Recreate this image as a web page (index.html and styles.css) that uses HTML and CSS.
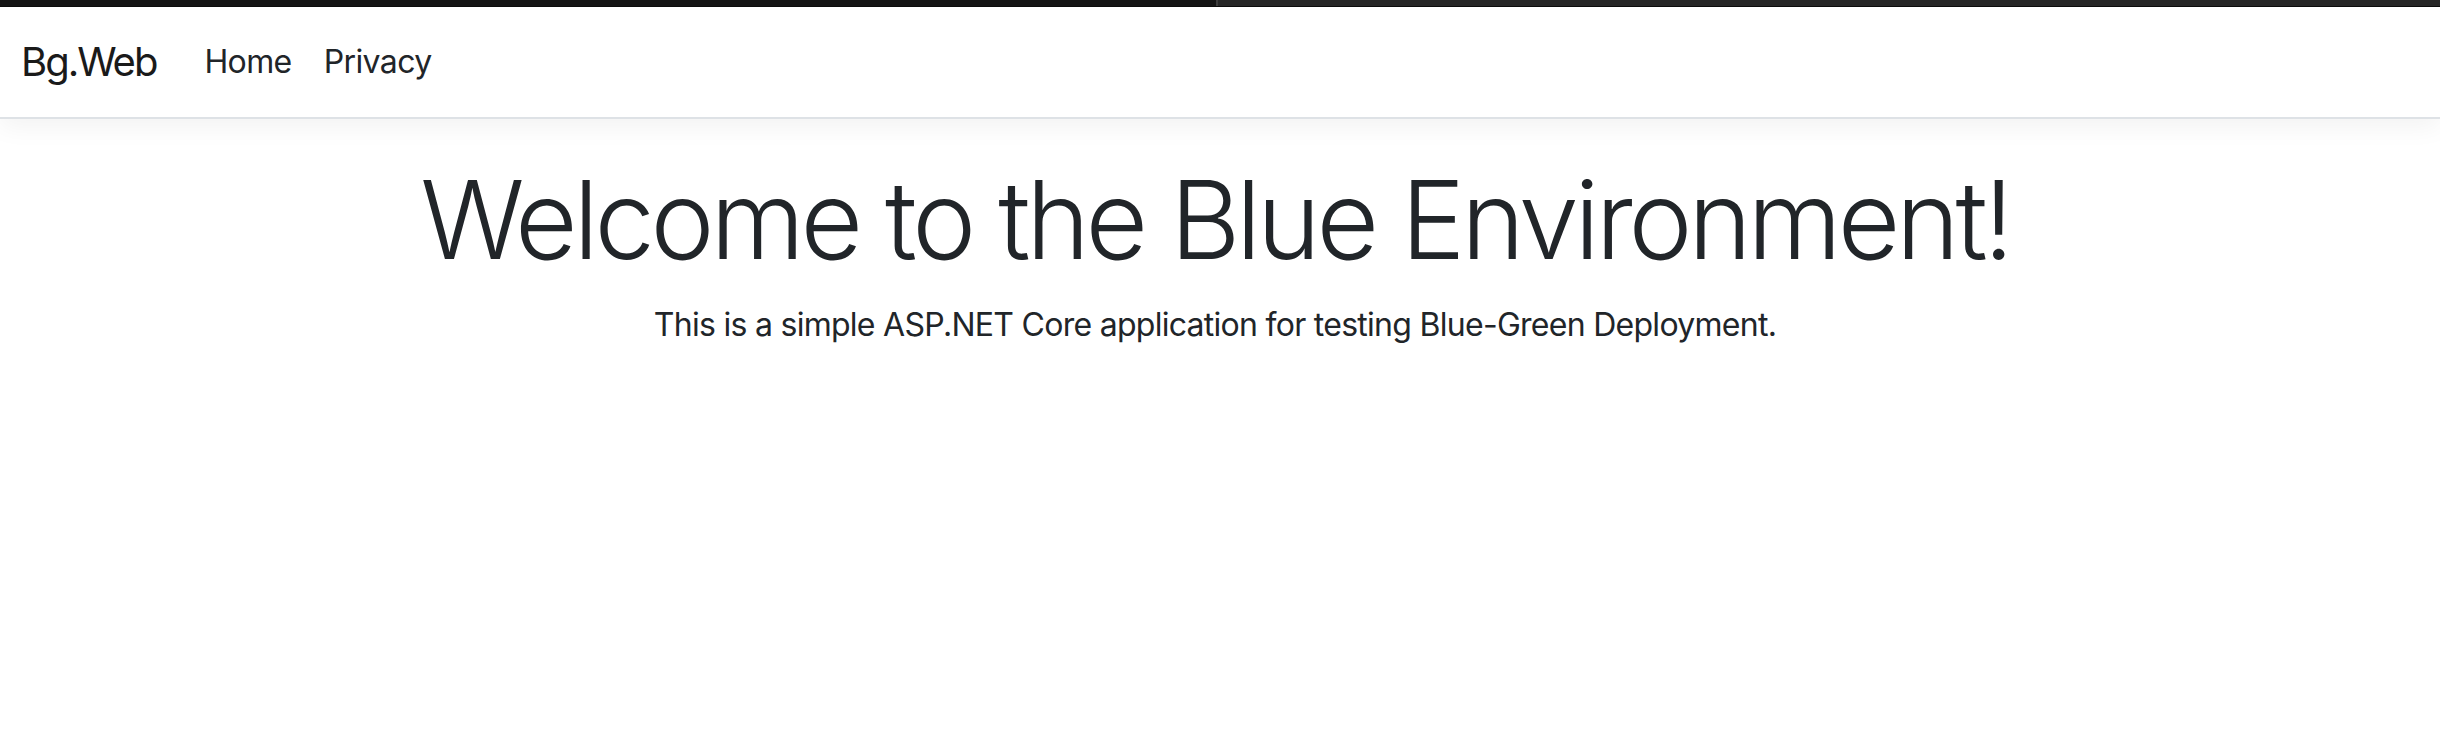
FILE: index.html
```html
<!DOCTYPE html>
<html lang="en">
<head>
<meta charset="utf-8">
<title>Home Page - Bg.Web</title>
<link rel="stylesheet" href="styles.css">
</head>
<body>
<div class="topbar"><div class="topbar-left"></div><div class="topbar-right"></div></div>
<header class="site-header">
  <nav class="navbar">
    <a class="brand" href="#">Bg.Web</a>
    <ul class="nav">
      <li><a class="nav-link" href="#">Home</a></li>
      <li><a class="nav-link" href="#">Privacy</a></li>
    </ul>
  </nav>
</header>
<main class="main">
  <div class="hero">
    <h1 class="display">Welcome to the Blue Environment!</h1>
    <p class="lead-text">This is a simple ASP.NET Core application for testing Blue-Green Deployment.</p>
  </div>
</main>
</body>
</html>
```
FILE: styles.css
```css
html, body {
  margin: 0;
  padding: 0;
  background: #fff;
}
body {
  font-family: Inter, "Noto Sans", "Liberation Sans", sans-serif;
  color: #212529;
  font-size: 32px;
  line-height: 1.5;
}
.topbar {
  display: flex;
  height: 6px;
  border-bottom: 1px solid #0c0c0c;
}
.topbar-left {
  width: 1216px;
  background: #141414;
}
.topbar-right {
  flex: 1;
  background: #262626;
  border-left: 2px solid #3c3c3c;
}
.site-header {
  border-bottom: 2px solid #dee2e6;
  box-shadow: 0 8px 24px rgba(0, 0, 0, 0.05);
  background: #fff;
}
.navbar {
  display: flex;
  align-items: center;
  height: 110px;
  padding: 0 21px;
}
.brand {
  font-size: 40px;
  color: #1a1a1a;
  text-decoration: none;
  margin-right: 32px;
  letter-spacing: -2px;
}
.nav {
  display: flex;
  list-style: none;
  margin: 0;
  padding: 0;
}
.nav-link {
  display: block;
  padding: 16px 16px;
  font-size: 32px;
  color: #212529;
  text-decoration: none;
  letter-spacing: -0.6px;
}
.main {
  padding-top: 32px;
}
.hero {
  text-align: center;
  padding-right: 10px;
}
.display {
  margin: 2px 0 14px;
  font-size: 108px;
  font-weight: 300;
  line-height: 134px;
  letter-spacing: -4.2px;
}
.lead-text {
  margin: 0;
  letter-spacing: -0.72px;
}
```
